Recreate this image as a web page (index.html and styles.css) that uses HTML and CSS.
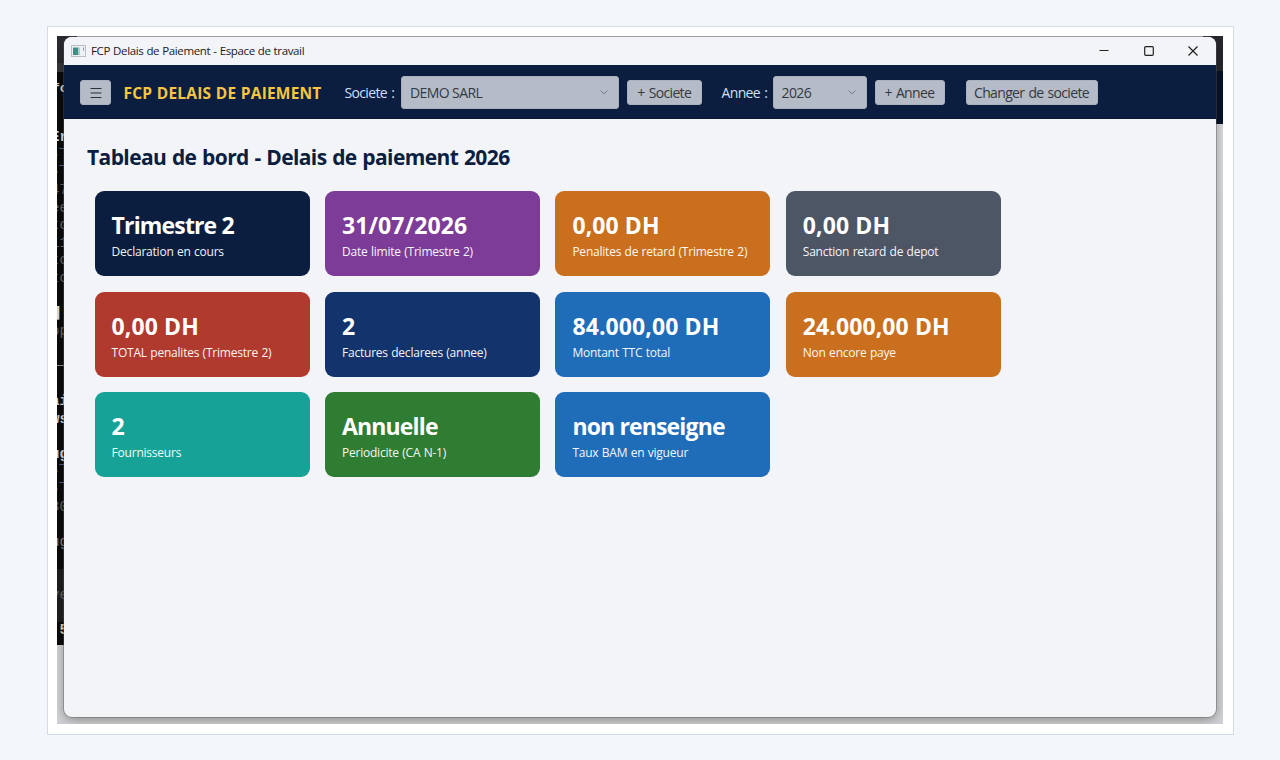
FILE: index.html
```html
<!DOCTYPE html>
<html lang="fr">
<head>
    <meta charset="UTF-8">
    <meta name="viewport" content="width=device-width, initial-scale=1.0">
    <title>FCP Delais de Paiement - Espace de travail</title>
    <link rel="stylesheet" href="styles.css">
</head>
<body>
    <div class="frame">
        <div class="desktop">
            <!-- Terminal behind the window -->
            <div class="terminal">
                <div class="term-tabs"></div>
                <div class="term-head">fc</div>
                <div class="term-line bright">Er</div>
                <div class="term-line blue">-¯</div>
                <div class="term-line blue">-¯</div>
                <div class="term-line">47</div>
                <div class="term-line">ee</div>
                <div class="term-line">to</div>
                <div class="term-line">11</div>
                <div class="term-line">to</div>
                <div class="term-line">to</div>
                <div class="term-line"></div>
                <div class="term-line bright term-cursor">█</div>
                <div class="term-line">pp</div>
                <div class="term-line"></div>
                <div class="term-line mid">──</div>
                <div class="term-line"></div>
                <div class="term-line bright">ai</div>
                <div class="term-line bright">ws</div>
                <div class="term-line"></div>
                <div class="term-line bright">ug</div>
                <div class="term-line blue">-¯</div>
                <div class="term-line blue">-¯</div>
                <div class="term-line">30</div>
                <div class="term-line"></div>
                <div class="term-line mid">ug</div>
                <div class="term-line"></div>
                <div class="term-input">ve</div>
                <div class="term-line sand">:5</div>
            </div>
            <div class="side"></div>

            <div class="window">
                <div class="titlebar">
                    <svg class="app-icon" width="15" height="12" viewBox="0 0 15 12">
                        <rect x="0.5" y="0.5" width="14" height="11" fill="#eef1f3" stroke="#b9bfc5"/>
                        <rect x="2" y="2.5" width="5" height="7.5" fill="#3f8f86"/>
                        <rect x="7" y="2.5" width="2" height="7.5" fill="#a9cfcb"/>
                        <path d="M12.5 2.5v3" stroke="#8c949b" fill="none"/>
                    </svg>
                    <span class="title">FCP Delais de Paiement - Espace de travail</span>
                    <div class="controls">
                        <svg width="10" height="10" viewBox="0 0 10 10"><path d="M0.500 4.500H9.500"/></svg>
                        <svg width="10" height="10" viewBox="0 0 10 10"><rect x="0.700" y="0.700" width="8.600" height="8.600" rx="1"/></svg>
                        <svg width="10" height="10" viewBox="0 0 10 10"><path d="M0.500 0.500L9.500 9.500M9.500 0.500L0.500 9.500"/></svg>
                    </div>
                </div>

                <div class="toolbar">
                    <button class="btn menu-btn">
                        <svg width="12" height="12" viewBox="0 0 12 12"><path d="M0.500 1.500h11M0.500 6h11M0.500 10.500h11"/></svg>
                    </button>
                    <span class="brand">FCP DELAIS DE PAIEMENT</span>
                    <span class="label label-societe">Societe :</span>
                    <div class="combo combo-societe">
                        <span>DEMO SARL</span>
                        <svg width="8" height="5" viewBox="0 0 8 5"><path d="M0.500 0.500L4 4L7.500 0.500"/></svg>
                    </div>
                    <button class="btn add-societe">+ Societe</button>
                    <span class="label label-annee">Annee :</span>
                    <div class="combo combo-annee">
                        <span>2026</span>
                        <svg width="8" height="5" viewBox="0 0 8 5"><path d="M0.500 0.500L4 4L7.500 0.500"/></svg>
                    </div>
                    <button class="btn add-annee">+ Annee</button>
                    <button class="btn change-btn">Changer de societe</button>
                </div>

                <div class="content">
                    <h1>Tableau de bord - Delais de paiement 2026</h1>
                    <div class="cards">
                        <div class="card navy">
                            <div class="value">Trimestre 2</div>
                            <div class="caption">Declaration en cours</div>
                        </div>
                        <div class="card purple">
                            <div class="value number">31/07/2026</div>
                            <div class="caption">Date limite (Trimestre 2)</div>
                        </div>
                        <div class="card orange">
                            <div class="value number">0,00 DH</div>
                            <div class="caption">Penalites de retard (Trimestre 2)</div>
                        </div>
                        <div class="card gray">
                            <div class="value number">0,00 DH</div>
                            <div class="caption">Sanction retard de depot</div>
                        </div>
                        <div class="card red">
                            <div class="value number">0,00 DH</div>
                            <div class="caption">TOTAL penalites (Trimestre 2)</div>
                        </div>
                        <div class="card darkblue">
                            <div class="value number">2</div>
                            <div class="caption">Factures declarees (annee)</div>
                        </div>
                        <div class="card blue-card">
                            <div class="value number">84.000,00 DH</div>
                            <div class="caption">Montant TTC total</div>
                        </div>
                        <div class="card orange">
                            <div class="value number">24.000,00 DH</div>
                            <div class="caption">Non encore paye</div>
                        </div>
                        <div class="card teal">
                            <div class="value number">2</div>
                            <div class="caption">Fournisseurs</div>
                        </div>
                        <div class="card green">
                            <div class="value">Annuelle</div>
                            <div class="caption">Periodicite (CA N-1)</div>
                        </div>
                        <div class="card blue-card">
                            <div class="value">non renseigne</div>
                            <div class="caption">Taux BAM en vigueur</div>
                        </div>
                    </div>
                </div>
            </div>
        </div>
    </div>
</body>
</html>
```
FILE: styles.css
```css
* {
    box-sizing: border-box;
}
body {
    margin: 0;
    padding: 26px 0 0 47px;
    height: 760px;
    overflow: hidden;
    background-color: #f3f6fb;
    font-family: "Open Sans", "Noto Sans", sans-serif;
}
.frame {
    width: 1187px;
    height: 709px;
    padding: 9px;
    background-color: #fff;
    border: 1px solid #d5dbe5;
}
.desktop {
    position: relative;
    width: 1166px;
    height: 688px;
    padding: 1px 7px 7px;
    background: linear-gradient(#dcdde0, #d2d3d6);
    overflow: hidden;
}
/* Terminal strip, only its left edge shows */
.terminal {
    position: absolute;
    top: 0;
    left: 0;
    width: 20px;
    height: 609px;
    overflow: hidden;
    background-color: #0b0b0b;
    color: #6a6a6a;
    font-family: "Liberation Mono", monospace;
    font-size: 14px;
}
.term-tabs {
    height: 36px;
    background-color: #2a2a30;
    border-bottom: 9px solid #38383a;
}
.term-head {
    height: 57.2px;
    padding-top: 9px;
    margin-left: -5px;
    color: #ddd;
    font-size: 13px;
    font-weight: bold;
}
.term-line {
    height: 17.6px;
    line-height: 17.6px;
    margin-left: -6px;
    white-space: nowrap;
}
.term-cursor {
    font-size: 12px;
    margin-left: -5px;
}
.term-input {
    height: 52.8px;
    line-height: 52.8px;
    text-indent: -6px;
    background-color: #1f1f1f;
}
.bright {
    color: #e0e0e0;
    font-weight: bold;
}
.mid {
    color: #909090;
}
.blue {
    color: #8fa6e0;
    font-weight: bold;
}
.sand {
    color: #e8d9b0;
    font-weight: bold;
}
.side {
    position: absolute;
    top: 0;
    right: 0;
    width: 20px;
    height: 88px;
    background: linear-gradient(#27272d 35px, #061329 35px);
}
/* Application window */
.window {
    position: relative;
    display: flex;
    flex-direction: column;
    width: 1152px;
    height: 680px;
    border-radius: 8px;
    overflow: hidden;
    background-color: #f2f4f8;
    box-shadow: 0 0 0 1px rgba(90, 90, 95, 0.4), 0 3px 12px rgba(0, 0, 0, 0.35);
}
.titlebar {
    display: flex;
    align-items: center;
    height: 28px;
    padding: 0 18px 1px 7px;
    background-color: #f2f4f8;
}
.title {
    margin-left: 5px;
    font-size: 11.5px;
    letter-spacing: -0.36px;
    word-spacing: 0.4px;
    color: #1a1a1a;
}
.controls {
    display: flex;
    gap: 34.5px;
    margin-left: auto;
}
.controls svg {
    fill: none;
    stroke: #222;
    stroke-width: 1.2;
}
.toolbar {
    display: flex;
    align-items: center;
    height: 54px;
    padding: 1px 0 0 16px;
    background-color: #0b1e3f;
    border-bottom: 1px solid #081733;
    font-size: 14px;
    white-space: nowrap;
}
.btn {
    height: 25px;
    padding: 0;
    border: 1px solid #aab2bf;
    border-radius: 3px;
    background-color: #b5bcc8;
    color: #34383f;
    font-family: inherit;
    font-size: 14px;
    letter-spacing: -0.65px;
    word-spacing: 1px;
    text-align: center;
}
.menu-btn {
    display: flex;
    align-items: center;
    justify-content: center;
    width: 31px;
}
.menu-btn svg {
    margin-top: 2px;
    fill: none;
    stroke: #2c3038;
    stroke-width: 1.2;
}
.brand {
    width: 221px;
    margin-left: 12.5px;
    padding-top: 1px;
    color: #f5c544;
    font-size: 15.5px;
    font-weight: 700;
    letter-spacing: 0.2px;
    word-spacing: 0.3px;
}
.label {
    padding-top: 1px;
    color: #d3dff2;
    letter-spacing: -0.65px;
    word-spacing: 1.2px;
}
.label-societe {
    width: 56.5px;
}
.label-annee {
    width: 51px;
    margin-left: 20px;
}
.combo {
    display: flex;
    align-items: center;
    justify-content: space-between;
    height: 33px;
    padding: 0 10px 0 8px;
    border: 1px solid #a9b0bc;
    border-radius: 3px;
    background-color: #b5bcc8;
    color: #34383f;
    letter-spacing: -0.6px;
}
.combo svg {
    fill: none;
    stroke: #777d88;
}
.combo-societe {
    width: 218px;
}
.combo-annee {
    width: 94px;
}
.add-societe {
    width: 74.5px;
    margin-left: 8px;
}
.add-annee {
    width: 70px;
    margin-left: 8px;
}
.change-btn {
    width: 132px;
    margin-left: 21px;
}
.content {
    flex: 1;
    padding: 22px 0 0 23px;
}
h1 {
    margin: 0;
    height: 32px;
    line-height: 32px;
    color: #0b1e3f;
    font-size: 21px;
    font-weight: 700;
    letter-spacing: -0.6px;
    word-spacing: 0.8px;
}
.cards {
    display: grid;
    grid-template-columns: repeat(4, 215px);
    grid-auto-rows: 85px;
    gap: 15.5px 15.4px;
    padding: 18px 0 0 7.6px;
}
.card {
    padding: 18px 0 0 17px;
    border-radius: 9px;
    color: #fff;
    white-space: nowrap;
}
.value {
    height: 32px;
    line-height: 32px;
    font-size: 23px;
    font-weight: 700;
    letter-spacing: -0.85px;
}
.number {
    letter-spacing: 0.1px;
}
.caption {
    height: 22px;
    line-height: 22px;
    font-size: 12px;
    letter-spacing: -0.22px;
    word-spacing: 0.5px;
    opacity: 0.95;
}
.navy {
    background-color: #0b1e3f;
}
.purple {
    background-color: #7d3c98;
}
.orange {
    background-color: #ca6f1e;
}
.gray {
    background-color: #4d5665;
}
.red {
    background-color: #b03a2e;
}
.darkblue {
    background-color: #12336b;
}
.blue-card {
    background-color: #1f6cb9;
}
.teal {
    background-color: #17a297;
}
.green {
    background-color: #2e7d32;
}
```
